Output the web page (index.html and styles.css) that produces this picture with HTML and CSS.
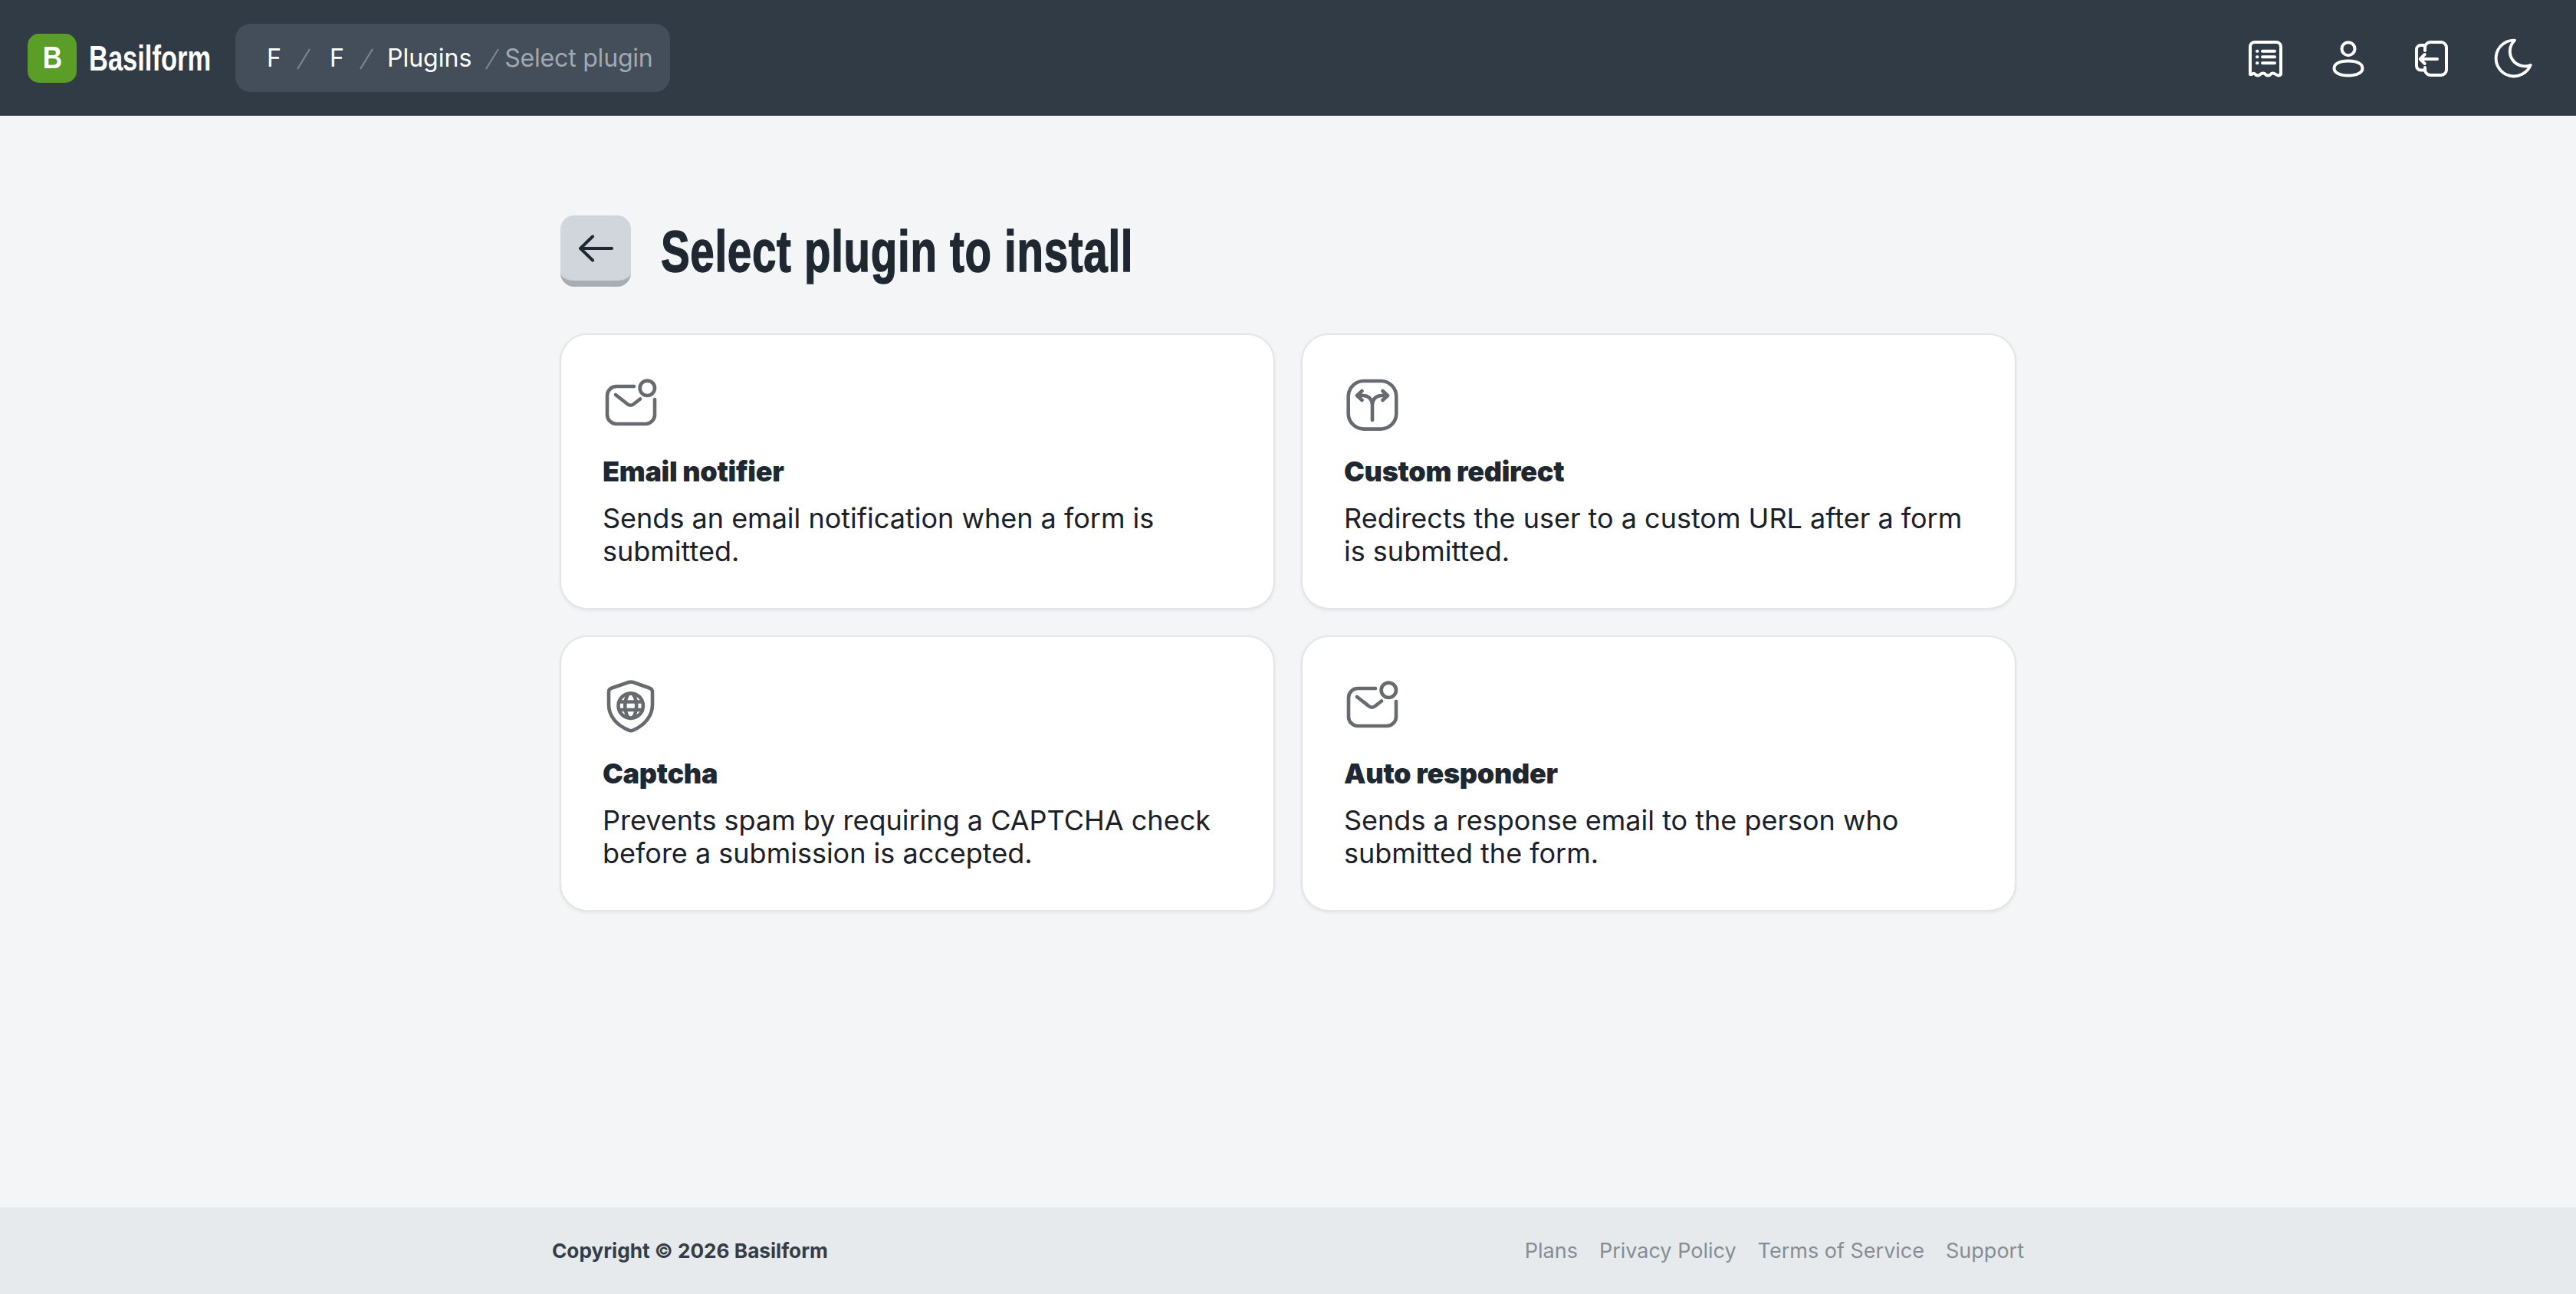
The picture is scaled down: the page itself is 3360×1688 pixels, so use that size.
FILE: index.html
```html
<!DOCTYPE html>
<html>
<head>
	<meta charset="UTF-8">
	<title>Basilform</title>
	<link rel="stylesheet" href="styles.css">
</head>
<body>
	<header class="topbar">
		<div class="brand">
			<span class="brand-mark"><span class="brand-letter">B</span></span>
			<span class="brand-name">Basilform</span>
		</div>
		<nav class="crumbs">
			<span class="crumb crumb-f">F</span>
			<svg class="sep" viewBox="0 0 18 28"><path d="M17 1L1 27"/></svg>
			<span class="crumb crumb-f">F</span>
			<svg class="sep sep-mid" viewBox="0 0 18 28"><path d="M17 1L1 27"/></svg>
			<span class="crumb crumb-plugins">Plugins</span>
			<svg class="sep sep-last" viewBox="0 0 18 28"><path d="M17 1L1 27"/></svg>
			<span class="crumb crumb-current">Select plugin</span>
		</nav>
		<div class="top-icons">
			<svg class="top-icon" viewBox="0 0 60 60"><path d="M10 51V15a6 6 0 0 1 6-6h28a6 6 0 0 1 6 6v36c-2 2-4 2-6.700 0s-5-2-6.700 0-5 2-6.600 0-5-2-6.700 0-5 2-6.600 0-3.700-1.600-4.700 0z"/><path d="M26 20.700h16M26 28.300h16M26 36.300h16M19 20.700h.5M19 28.300h.5M19 36.300h.5"/></svg>
			<svg class="top-icon" viewBox="0 0 60 60"><circle cx="30" cy="17.700" r="8.500"/><path d="M30 33.500c11 0 18.500 3.500 18.500 9.500s-7.500 9.500-18.500 9.500-18.500-3.500-18.500-9.500 7.500-9.500 18.500-9.500z"/></svg>
			<svg class="top-icon" viewBox="0 0 60 60"><path d="M22 20v-4a7 7 0 0 1 7-7h14a7 7 0 0 1 7 7v29a7 7 0 0 1-7 7H29a7 7 0 0 1-7-7v-3"/><path d="M21 13h-4.500A5.500 5.500 0 0 0 11 18.500V40a5.500 5.500 0 0 0 5.500 5.500H21"/><path d="M38 31H16M21.700 25l-6 6 6 6"/></svg>
			<svg class="top-icon" viewBox="0 0 60 60"><path transform="translate(-1.200 -1.200) scale(2.600)" stroke-width="1.500" d="M12 3c.132 0 .263 0 .393 0a7.500 7.500 0 0 0 7.920 12.446a9 9 0 1 1 -8.313 -12.454z"/></svg>
		</div>
	</header>

	<main class="content">
		<div class="page-head">
			<a class="back-btn">
				<svg class="back-icon" viewBox="0 0 48 36"><path d="M45 18H4M20 2.500L4 18l16 15.500"/></svg>
			</a>
			<h1 class="page-title">Select plugin to install</h1>
		</div>

		<section class="plugin-grid">
			<article class="plugin-card">
				<svg class="plugin-icon" viewBox="0 0 76 76"><path d="M42 14H19A12 12 0 0 0 7 26v25a12 12 0 0 0 12 12h38a12 12 0 0 0 12-12V31"/><path d="M18 25l16 12.500q3.500 2.500 7 0l9-7"/><circle cx="59.300" cy="16.300" r="9.700"/></svg>
				<h2 class="plugin-name">Email notifier</h2>
				<p class="plugin-desc">Sends an email notification when a form is submitted.</p>
			</article>
			<article class="plugin-card">
				<svg class="plugin-icon" viewBox="0 0 76 76"><rect x="6.700" y="7" width="62.600" height="62.600" rx="20"/><path d="M38 58V38c0-7-5-12-12-12h-7M38 38c0-7 5-12 12-12h7M24.500 20L18 26l6.500 6M51.500 20L58 26l-6.500 6"/></svg>
				<h2 class="plugin-name">Custom redirect</h2>
				<p class="plugin-desc">Redirects the user to a custom URL after a form is submitted.</p>
			</article>
			<article class="plugin-card">
				<svg class="plugin-icon" viewBox="0 2 76 76"><path d="M35 8L13 15.500a5 5 0 0 0-4 5V37c0 15 10 27 26 33.500a7 7 0 0 0 6 0C56 64 66 52 66 37V20.500a5 5 0 0 0-4-5L41 8a10 10 0 0 0-6 0z"/><circle cx="37.700" cy="38.700" r="16.200"/><ellipse cx="37.700" cy="38.700" rx="7.500" ry="16.200"/><path d="M23 33.500h29.400M23 44h29.400"/></svg>
				<h2 class="plugin-name">Captcha</h2>
				<p class="plugin-desc">Prevents spam by requiring a CAPTCHA check before a submission is accepted.</p>
			</article>
			<article class="plugin-card">
				<svg class="plugin-icon" viewBox="0 0 76 76"><path d="M42 14H19A12 12 0 0 0 7 26v25a12 12 0 0 0 12 12h38a12 12 0 0 0 12-12V31"/><path d="M18 25l16 12.500q3.500 2.500 7 0l9-7"/><circle cx="59.300" cy="16.300" r="9.700"/></svg>
				<h2 class="plugin-name">Auto responder</h2>
				<p class="plugin-desc">Sends a response email to the person who submitted the form.</p>
			</article>
		</section>
	</main>

	<footer class="footer">
		<div class="footer-inner">
			<span class="copyright">Copyright © 2026 Basilform</span>
			<div class="footer-links">
				<a>Plans</a>
				<a>Privacy Policy</a>
				<a>Terms of Service</a>
				<a>Support</a>
			</div>
		</div>
	</footer>
</body>
</html>
```
FILE: styles.css
```css
* {
	box-sizing: border-box;
}
html, body {
	margin: 0;
	height: 100%;
}
body {
	display: flex;
	flex-direction: column;
	background: #f3f5f7;
	color: #1f2730;
	font-family: "Inter", "Liberation Sans", sans-serif;
}
.topbar {
	display: flex;
	align-items: center;
	height: 151px;
	padding: 0 51px 0 36px;
	background: #303b45;
}
.brand {
	display: flex;
	flex: none;
	align-items: center;
	width: 271px;
}
.brand-mark {
	display: flex;
	flex: none;
	align-items: center;
	justify-content: center;
	width: 64px;
	height: 64px;
	border-radius: 15px;
	background: #5b9e27;
}
.brand-letter {
	color: #fff;
	font: bold 40px "Liberation Sans", sans-serif;
	transform: scaleX(.88);
}
.brand-name {
	flex: none;
	margin-left: 16px;
	color: #fff;
	font: bold 46px "Liberation Sans", sans-serif;
	transform: scaleX(.75);
	transform-origin: left center;
}
.crumbs {
	display: flex;
	align-items: center;
	width: 567px;
	height: 89px;
	padding-left: 41px;
	border-radius: 20px;
	background: #434e5a;
	color: #fff;
	font-size: 32px;
}
.sep {
	flex: none;
	width: 18px;
	height: 28px;
	margin: 3px 25px 0 21px;
	fill: none;
	stroke: #7f8893;
	stroke-width: 2;
}
.sep-mid {
	margin-right: 18px;
}
.sep-last {
	margin: 3px 7px 0 18px;
}
.crumb-f {
	width: 18px;
}
.crumb-current {
	color: #a1a8b1;
	letter-spacing: -.2px;
}
.top-icons {
	display: flex;
	gap: 48px;
	margin-left: auto;
}
.top-icon {
	width: 60px;
	height: 60px;
	fill: none;
	stroke: #fff;
	stroke-width: 4;
	stroke-linecap: round;
	stroke-linejoin: round;
}
.content {
	flex: 1;
	width: 1900px;
	margin: 0 auto;
	padding-top: 130px;
}
.page-head {
	display: flex;
	align-items: center;
	margin-bottom: 61px;
	padding-left: 1px;
}
.back-btn {
	display: flex;
	flex: none;
	align-items: center;
	justify-content: center;
	width: 92px;
	height: 93px;
	border-bottom: 8px solid #a9adb1;
	border-radius: 18px;
	background: #d1d6dd;
}
.back-icon {
	width: 48px;
	height: 36px;
	fill: none;
	stroke: #1f2730;
	stroke-width: 4;
	stroke-linecap: round;
	stroke-linejoin: round;
}
.page-title {
	flex: none;
	margin: 0 0 0 39px;
	color: #1f2730;
	font: bold 76px "Liberation Sans", sans-serif;
	letter-spacing: 1px;
	-webkit-text-stroke: 1.5px #1f2730;
	transform: scaleX(.742);
	transform-origin: left center;
}
.plugin-grid {
	display: grid;
	grid-template-columns: 1fr 1fr;
	gap: 34px;
}
.plugin-card {
	height: 360px;
	padding: 53px 52px 0 54px;
	border: 2px solid #e3e5e8;
	border-radius: 36px;
	background: #fff;
	box-shadow: 0 2px 4px rgba(0, 0, 0, .06);
}
.plugin-icon {
	display: block;
	width: 76px;
	height: 76px;
	margin-left: -1px;
	fill: none;
	stroke: #676b70;
	stroke-width: 4.600;
	stroke-linecap: round;
	stroke-linejoin: round;
}
.plugin-name {
	margin: 26px 0 17px;
	color: #1f2730;
	font-size: 36px;
	font-weight: 900;
	letter-spacing: -.3px;
	line-height: 46px;
}
.plugin-desc {
	margin: 0;
	color: #1c2128;
	font-size: 36px;
	line-height: 43px;
}
.footer {
	height: 113px;
	background: #e6eaed;
}
.footer-inner {
	display: flex;
	align-items: center;
	justify-content: space-between;
	width: 1920px;
	height: 100%;
	margin: 0 auto;
	font-size: 27px;
}
.copyright {
	color: #343d47;
	font-size: 26.200px;
	font-weight: 700;
}
.footer-links {
	display: flex;
	gap: 28px;
	color: #868d93;
}
```
